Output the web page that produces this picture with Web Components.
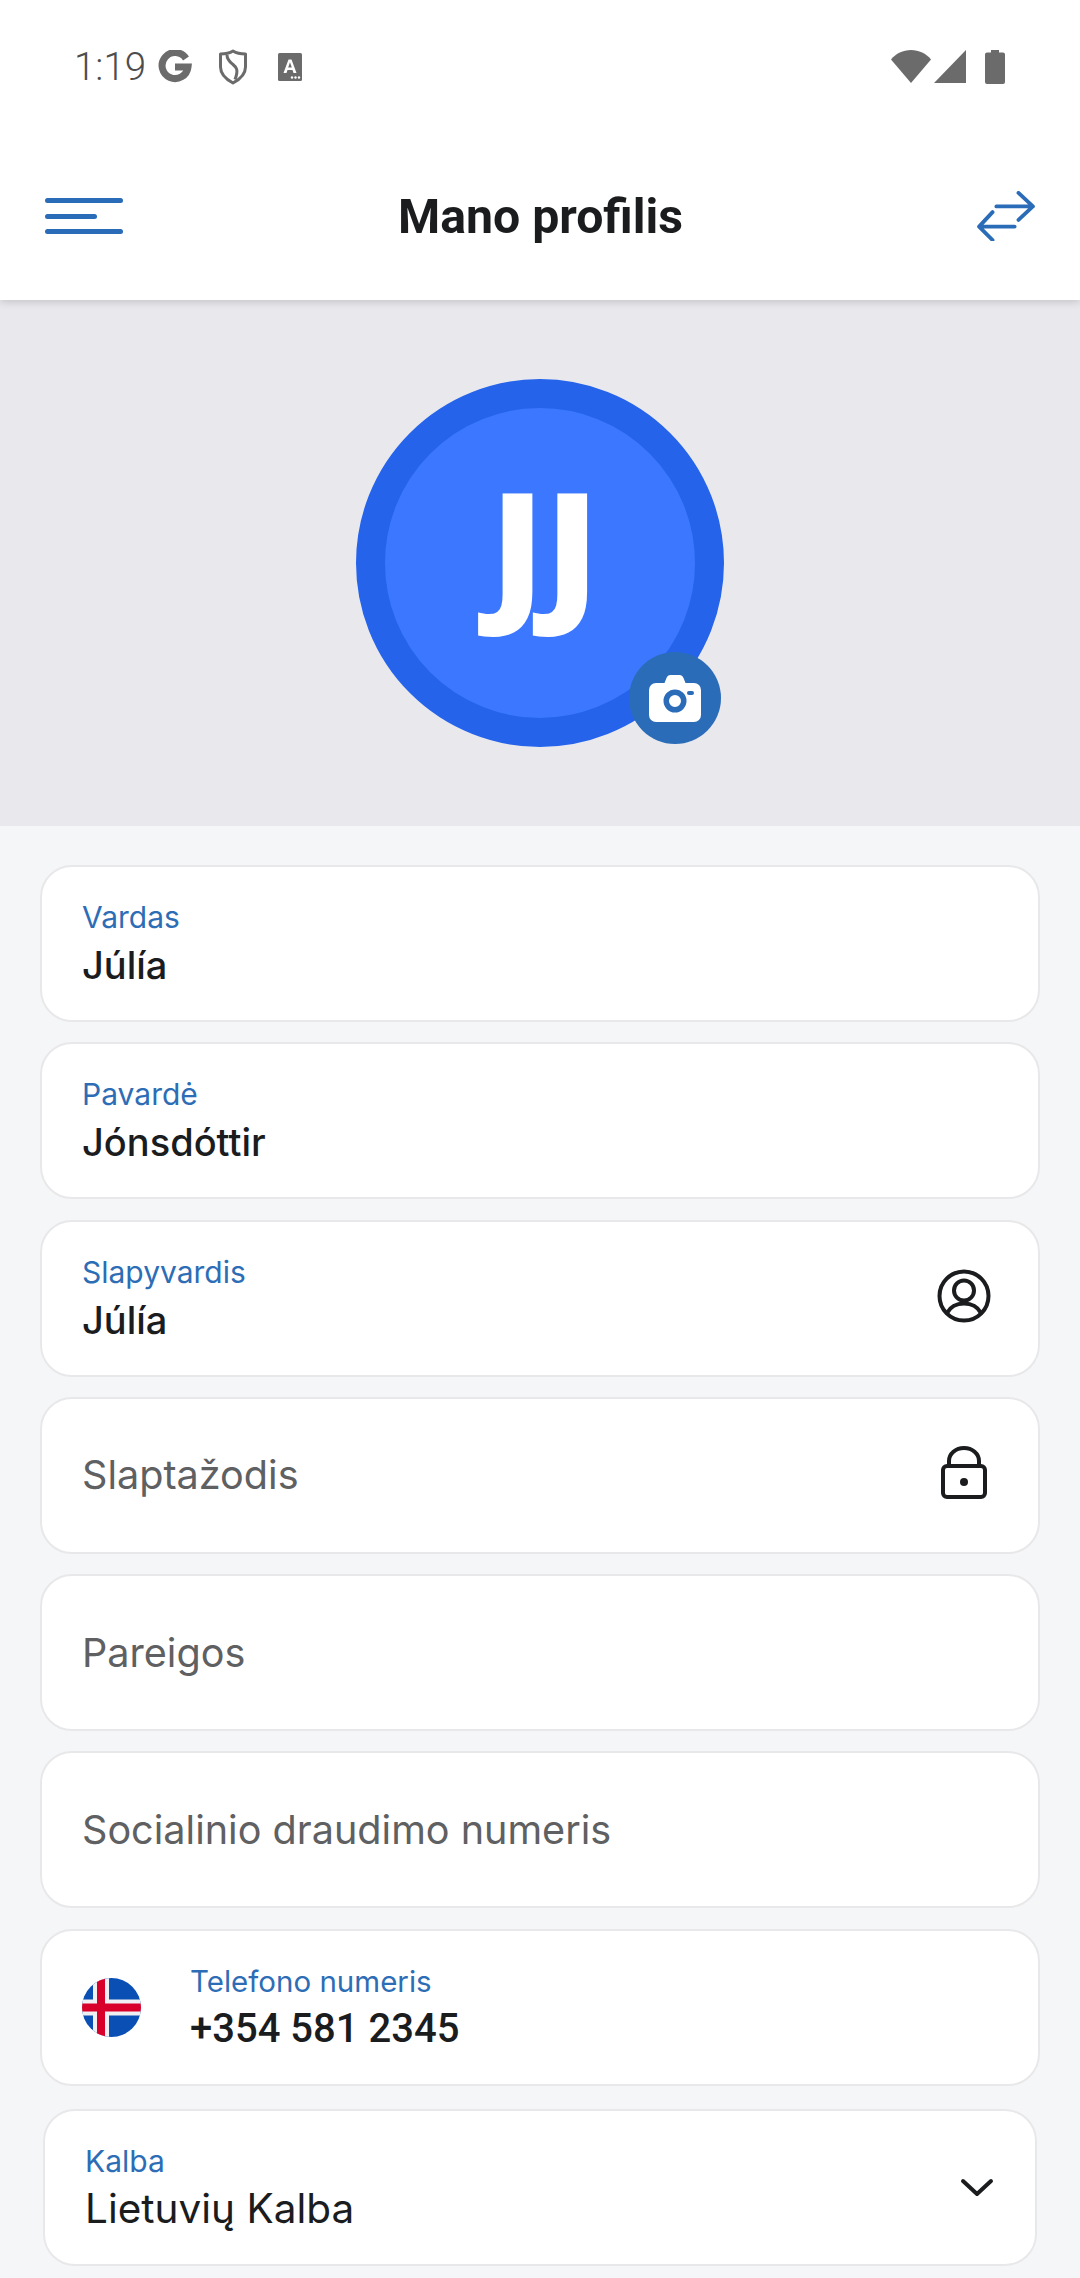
<!DOCTYPE html>
<html lang="lt">
<head>
<meta charset="utf-8">
<title>Mano profilis</title>
<style>
  html, body { margin: 0; height: 2278px; overflow: hidden; background: #f5f6f8; }
  body { font-family: "Inter", sans-serif; }
</style>
</head>
<body>
<profile-screen>
  <status-bar slot="top" time="1:19"></status-bar>
  <app-bar slot="top" title="Mano profilis"></app-bar>
  <profile-hero slot="top" initials="JJ"></profile-hero>

  <field-card label="Vardas" value="Júlía"></field-card>
  <field-card label="Pavardė" value="Jónsdóttir"></field-card>
  <field-card label="Slapyvardis" value="Júlía">
    <svg slot="trailing" width="56" height="56" viewBox="0 0 56 56" fill="none" stroke="#1a1c1e" stroke-width="4">
      <circle cx="28" cy="28" r="24.5"/>
      <circle cx="28" cy="22.5" r="10"/>
      <path d="M11 45c3.500-6.500 9.500-9.500 17-9.500s13.500 3 17 9.500"/>
    </svg>
  </field-card>
  <field-card placeholder="Slaptažodis">
    <svg slot="trailing" width="56" height="56" viewBox="0 0 56 56" fill="none" stroke="#1a1c1e" stroke-width="4" stroke-linejoin="round">
      <rect x="7" y="21" width="42" height="31" rx="4"/>
      <path d="M13 21v-5a15 13 0 0 1 30 0v5"/>
      <circle cx="28" cy="37" r="4" fill="#1a1c1e" stroke="none"/>
    </svg>
  </field-card>
  <field-card placeholder="Pareigos"></field-card>
  <field-card placeholder="Socialinio draudimo numeris"></field-card>
  <field-card label="Telefono numeris" value="+354 581 2345" kind="phone">
    <svg slot="leading" width="59" height="59" viewBox="0 0 59 59">
      <defs><clipPath id="flag"><circle cx="29.500" cy="29.500" r="29.500"/></clipPath></defs>
      <g clip-path="url(#flag)">
        <rect width="59" height="59" fill="#0a50b4"/>
        <rect x="11" width="16" height="59" fill="#f0f0f2"/>
        <rect y="21.500" width="59" height="16" fill="#f0f0f2"/>
        <rect x="15" width="8" height="59" fill="#d8002b"/>
        <rect y="25.500" width="59" height="8" fill="#d8002b"/>
      </g>
    </svg>
  </field-card>
  <field-card label="Kalba" value="Lietuvių Kalba" kind="select">
    <svg slot="trailing" width="56" height="56" viewBox="0 0 56 56" fill="none" stroke="#1a1c1e" stroke-width="4" stroke-linecap="round" stroke-linejoin="round">
      <path d="M14 21l14 13 14-13"/>
    </svg>
  </field-card>
</profile-screen>

<script>
class ProfileScreen extends HTMLElement {
  constructor() {
    super();
    this.attachShadow({ mode: "open" });
  }
  connectedCallback() {
    this.shadowRoot.innerHTML = `<style>
      :host { display: block; }
      .fields {
        display: flex;
        flex-direction: column;
        gap: 20.3px;
        padding: 39px 40px 0;
      }
    </style>
    <slot name="top"></slot>
    <div class="fields"><slot></slot></div>`;
  }
}
customElements.define("profile-screen", ProfileScreen);

class StatusBar extends HTMLElement {
  constructor() {
    super();
    this.attachShadow({ mode: "open" });
  }
  connectedCallback() {
    this.shadowRoot.innerHTML = `<style>
      :host {
        display: flex;
        align-items: center;
        height: 132px;
        box-sizing: border-box;
        padding: 1px 75px 0 74px;
        background: #fff;
      }
      .time {
        font: 300 38.5px "Roboto", sans-serif;
        color: #4d4d4d;
        margin-right: 12px;
      }
      .left { display: flex; align-items: center; }
      .right { display: flex; align-items: center; margin-left: auto; }
      svg { display: block; }
    </style>
    <div class="left">
      <span class="time">${this.getAttribute("time")}</span>
      <svg width="34" height="34" viewBox="0 0 34 34" fill="none" stroke="#6b6b6b" stroke-width="7">
        <path d="M28 8.500A13 13 0 1 0 30 17H17"/>
      </svg>
      <svg style="margin-left:26px" width="30" height="36" viewBox="0 0 30 36" fill="none" stroke="#6b6b6b" stroke-width="3" stroke-linejoin="round">
        <path d="M15 2c4 2.500 8 3 12.500 3v13c0 7-5 12-12.500 16C7.500 30 2.500 25 2.500 18V5C7 5 11 4.500 15 2z"/>
        <path d="M9 6c0 5 3 7 6 9.500s6 5 2 15"/>
      </svg>
      <svg style="margin-left:30px" width="24" height="28" viewBox="0 0 24 28">
        <rect width="24" height="28" rx="1.500" fill="#6b6b6b"/>
        <path d="M5.500 20L10.500 6.500h3L18.500 20h-3l-1-3h-5l-1 3zM10.200 14.500h3.600L12 9.200z" fill="#fff"/>
        <circle cx="14" cy="24.500" r="1.200" fill="#fff"/><circle cx="17.500" cy="24.500" r="1.200" fill="#fff"/><circle cx="21" cy="24.500" r="1.200" fill="#fff"/>
      </svg>
    </div>
    <div class="right">
      <svg width="40" height="33" viewBox="0 0 40 33"><path d="M0 9.500C5 3.500 12 0 20 0s15 3.500 20 9.500L20 33z" fill="#6b6b6b"/></svg>
      <svg style="margin-left:3px" width="32" height="33" viewBox="0 0 32 33"><path d="M32 0v33H0z" fill="#6b6b6b"/></svg>
      <svg style="margin-left:19px" width="20" height="34" viewBox="0 0 20 34"><path d="M6 0h8v2.500h4a2 2 0 0 1 2 2V32a2 2 0 0 1-2 2H2a2 2 0 0 1-2-2V4.500a2 2 0 0 1 2-2h4z" fill="#6b6b6b"/></svg>
    </div>`;
  }
}
customElements.define("status-bar", StatusBar);

class AppBar extends HTMLElement {
  constructor() {
    super();
    this.attachShadow({ mode: "open" });
  }
  connectedCallback() {
    this.shadowRoot.innerHTML = `<style>
      :host {
        display: grid;
        grid-template-columns: 1fr auto 1fr;
        align-items: center;
        position: relative;
        z-index: 1;
        height: 168px;
        box-sizing: border-box;
        padding: 0 44px 0 45px;
        background: #fff;
        box-shadow: 0 2px 8px rgba(0, 0, 0, 0.16);
        clip-path: inset(0 0 -20px 0);
      }
      h1 {
        margin: 0;
        font: 700 48.2px "Roboto", sans-serif;
        color: #1a1c1e;
      }
      svg { display: block; }
      .swap { justify-self: end; }
    </style>
    <svg width="78" height="36" viewBox="0 0 78 36" fill="#2b6cb8">
      <rect y="0" width="78" height="5" rx="2.500"/>
      <rect y="16" width="52" height="5" rx="2.500"/>
      <rect y="31" width="78" height="5" rx="2.500"/>
    </svg>
    <h1>${this.getAttribute("title")}</h1>
    <svg class="swap" width="60" height="50" viewBox="0 0 62 52" fill="none" stroke="#2b6cb8" stroke-width="4" stroke-linecap="round" stroke-linejoin="round">
      <path d="M21 16h38M44 2l15 14-15 14"/>
      <path d="M40 37H3M17 22L3 37l14 14"/>
    </svg>`;
  }
}
customElements.define("app-bar", AppBar);

class ProfileHero extends HTMLElement {
  constructor() {
    super();
    this.attachShadow({ mode: "open" });
  }
  connectedCallback() {
    this.shadowRoot.innerHTML = `<style>
      :host {
        display: flex;
        justify-content: center;
        padding: 79px 0;
        background: #e9e9ed;
      }
      .avatar {
        position: relative;
        width: 368px;
        height: 368px;
        box-sizing: border-box;
        border: 29px solid #2563eb;
        border-radius: 50%;
        background: #3b78ff;
        display: flex;
        align-items: center;
        justify-content: center;
      }
      .initials {
        font: 800 153px/1 "Open Sans", sans-serif;
        letter-spacing: 1px;
        color: #fff;
        padding: 0 0 40px 10px;
      }
      .camera {
        position: absolute;
        right: -26px;
        bottom: -26px;
        width: 92px;
        height: 92px;
        border-radius: 50%;
        background: #2b6cb8;
        display: flex;
        align-items: center;
        justify-content: center;
      }
    </style>
    <div class="avatar">
      <span class="initials">${this.getAttribute("initials")}</span>
      <div class="camera">
        <svg width="52" height="47" viewBox="0 0 52 47">
          <path fill-rule="evenodd" fill="#fff" d="M7 8h8.500l2-5c.8-2 2-3 4-3h9c2 0 3.200 1 4 3l2 5H45a7 7 0 0 1 7 7v25a7 7 0 0 1-7 7H7a7 7 0 0 1-7-7V15a7 7 0 0 1 7-7zM26 14.500a11.500 11.500 0 1 0 0 23 11.500 11.500 0 0 0 0-23zM26 20a6 6 0 1 1 0 12 6 6 0 0 1 0-12z"/>
          <rect x="38" y="16" width="7" height="4" rx="2" fill="#2b6cb8"/>
        </svg>
      </div>
    </div>`;
  }
}
customElements.define("profile-hero", ProfileHero);

class FieldCard extends HTMLElement {
  constructor() {
    super();
    this.attachShadow({ mode: "open" });
  }
  connectedCallback() {
    const label = this.getAttribute("label");
    const value = this.getAttribute("value");
    const placeholder = this.getAttribute("placeholder");
    const text = placeholder
      ? `<div class="placeholder">${placeholder}</div>`
      : `<div class="label">${label}</div><div class="value">${value}</div>`;
    this.shadowRoot.innerHTML = `<style>
      :host {
        display: flex;
        align-items: center;
        height: 157px;
        box-sizing: border-box;
        padding: 0 46px 0 40px;
        background: #fff;
        border: 2px solid #e8e8ea;
        border-radius: 32px;
      }
      :host([kind="phone"]) { gap: 49px; }
      :host([kind="select"]) { margin: 3px 3px 0; padding-right: 30px; }
      .text { flex: 1; min-width: 0; }
      .label {
        font: 400 30px/36px "Inter", sans-serif;
        color: #2d6db5;
      }
      .value {
        font: 500 38px/46px "Inter", sans-serif;
        color: #1a1c1e;
        margin-top: 7px;
      }
      :host([kind="phone"]) .label { font-size: 29.5px; }
      :host([kind="phone"]) .value { font-family: "Roboto", sans-serif; font-size: 40px; }
      :host([kind="select"]) .value { font-weight: 400; font-size: 40.5px; }
      .placeholder {
        font: 400 39.6px/46px "Inter", sans-serif;
        color: #5f6062;
      }
      ::slotted(svg) { display: block; flex: none; }
      ::slotted(svg[slot="trailing"]) { margin-bottom: 5px; }
      :host([kind="select"]) ::slotted(svg[slot="trailing"]) { margin-bottom: 0; }
    </style>
    <slot name="leading"></slot>
    <div class="text">${text}</div>
    <slot name="trailing"></slot>`;
  }
}
customElements.define("field-card", FieldCard);
</script>
</body>
</html>
